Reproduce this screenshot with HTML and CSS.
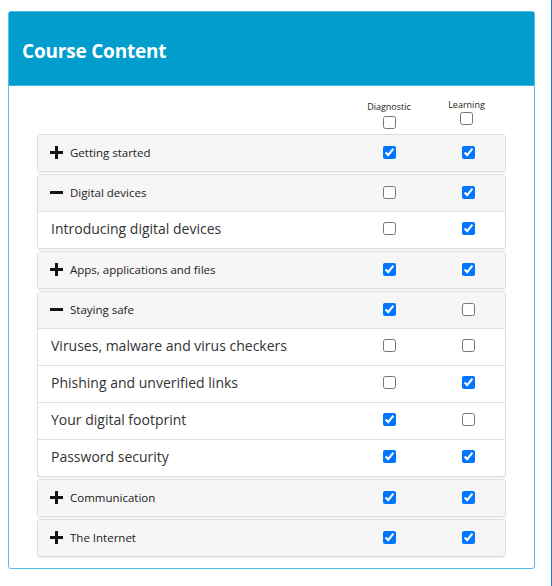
FILE: index.html
```html
<!DOCTYPE html>
<html lang="en">
<head>
<meta charset="utf-8">
<title>Course Content</title>
<link rel="stylesheet" href="styles.css">
</head>
<body>
<div class="card">
  <div class="card-header"><h2 class="title">Course Content</h2></div>
  <div class="card-body">
    <div class="cols-head">
      <div></div>
      <div class="col-label diag"><span>Diagnostic</span><input type="checkbox"></div>
      <div class="col-label learn"><span>Learning</span><input type="checkbox"></div>
    </div>
    <div class="panels">
      <div class="panel">
        <div class="row heading">
          <div class="name"><svg class="icon" viewBox="0 0 13 13"><rect x="0" y="5" width="13" height="3"/><rect x="5" y="0" width="3" height="13"/></svg><span>Getting started</span></div>
          <input type="checkbox" checked><input type="checkbox" checked>
        </div>
      </div>
      <div class="panel">
        <div class="row heading">
          <div class="name"><svg class="icon" viewBox="0 0 13 13"><rect x="0" y="5" width="13" height="3"/></svg><span>Digital devices</span></div>
          <input type="checkbox"><input type="checkbox" checked>
        </div>
        <div class="row item">
          <div class="name">Introducing digital devices</div>
          <input type="checkbox"><input type="checkbox" checked>
        </div>
      </div>
      <div class="panel">
        <div class="row heading">
          <div class="name"><svg class="icon" viewBox="0 0 13 13"><rect x="0" y="5" width="13" height="3"/><rect x="5" y="0" width="3" height="13"/></svg><span>Apps, applications and files</span></div>
          <input type="checkbox" checked><input type="checkbox" checked>
        </div>
      </div>
      <div class="panel">
        <div class="row heading">
          <div class="name"><svg class="icon" viewBox="0 0 13 13"><rect x="0" y="5" width="13" height="3"/></svg><span>Staying safe</span></div>
          <input type="checkbox" checked><input type="checkbox">
        </div>
        <div class="row item">
          <div class="name">Viruses, malware and virus checkers</div>
          <input type="checkbox"><input type="checkbox">
        </div>
        <div class="row item">
          <div class="name">Phishing and unverified links</div>
          <input type="checkbox"><input type="checkbox" checked>
        </div>
        <div class="row item">
          <div class="name">Your digital footprint</div>
          <input type="checkbox" checked><input type="checkbox">
        </div>
        <div class="row item">
          <div class="name">Password security</div>
          <input type="checkbox" checked><input type="checkbox" checked>
        </div>
      </div>
      <div class="panel">
        <div class="row heading">
          <div class="name"><svg class="icon" viewBox="0 0 13 13"><rect x="0" y="5" width="13" height="3"/><rect x="5" y="0" width="3" height="13"/></svg><span>Communication</span></div>
          <input type="checkbox" checked><input type="checkbox" checked>
        </div>
      </div>
      <div class="panel">
        <div class="row heading">
          <div class="name"><svg class="icon" viewBox="0 0 13 13"><rect x="0" y="5" width="13" height="3"/><rect x="5" y="0" width="3" height="13"/></svg><span>The Internet</span></div>
          <input type="checkbox" checked><input type="checkbox" checked>
        </div>
      </div>
    </div>
  </div>
</div>
</body>
</html>
```
FILE: styles.css
```css
html {
  padding-right: 1px;
  border-right: 1px solid #1f6fd6;
  min-height: 100%;
}
body {
  margin: 11px 0 0 8px;
  font-family: "Open Sans", "Noto Sans", sans-serif;
  color: #222;
}
.card {
  width: 527px;
  box-sizing: border-box;
  border: 1px solid #4fc1e6;
  border-radius: 3px;
  background: #fff;
}
.card-header {
  height: 74px;
  box-sizing: border-box;
  background: #019ecd;
  display: flex;
  align-items: center;
  padding: 4px 0 0 13px;
  border-bottom: 1px solid #3fb5df;
}
.title {
  margin: 0;
  font-size: 19px;
  font-weight: 700;
  color: #fff;
  letter-spacing: -0.2px;
}
.card-body {
  padding: 0 28px 11px 28px;
}
.cols-head {
  height: 48px;
  box-sizing: border-box;
  display: grid;
  grid-template-columns: 1fr 60px 60px;
  column-gap: 19px;
  padding: 0 8px 0 1px;
}
.col-label {
  display: flex;
  flex-direction: column;
  align-items: center;
  font-size: 9px;
  line-height: 12px;
  color: #222;
}
.col-label input {
  margin: 3px 0 0 0;
}
.col-label.diag {
  padding-top: 15px;
}
.col-label.learn {
  padding-top: 13px;
  padding-right: 3px;
}
.col-label.learn input {
  margin-top: 1px;
}
.panels {
  display: flex;
  flex-direction: column;
  gap: 2px;
}
.panel {
  border: 1px solid #dedede;
  border-radius: 3px;
  background: #fff;
  box-shadow: 0 1px 1px rgba(0, 0, 0, 0.08);
}
.row {
  display: grid;
  grid-template-columns: 1fr 60px 60px;
  column-gap: 19px;
  align-items: center;
  padding-right: 7px;
  box-sizing: border-box;
}
.row input {
  margin: 0;
  justify-self: center;
}
.heading {
  height: 36px;
  background: #f6f6f6;
  padding-left: 12px;
  padding-bottom: 2px;
}
.heading .name {
  display: flex;
  align-items: center;
  gap: 7px;
  font-size: 11.5px;
  color: #222;
}
.icon {
  width: 13px;
  height: 13px;
  fill: #141414;
  flex: none;
}
.item {
  height: 37px;
  border-top: 1px solid #e2e2e2;
  padding-left: 13px;
  padding-bottom: 3px;
}
.item .name {
  font-size: 14px;
  color: #333;
}
```
